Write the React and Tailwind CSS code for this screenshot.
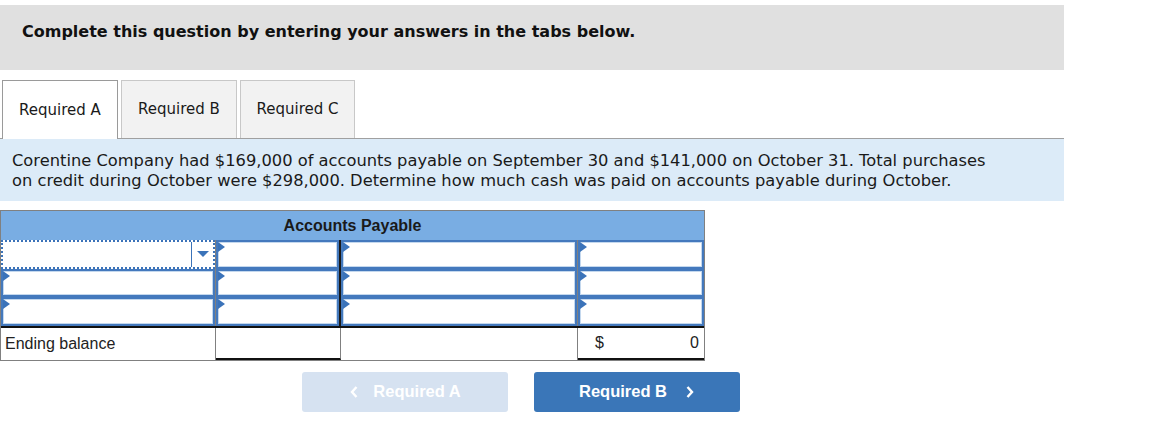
import React from "react";

const verdana = { fontFamily: "'DejaVu Sans', Verdana, sans-serif" };
const arial = { fontFamily: "'Liberation Sans', Arial, sans-serif" };

const Flag = () => (
  <span className="absolute top-0 left-0 w-0 h-0 border-y-[5px] border-y-transparent border-l-[7px] border-l-[#3b73b9]" />
);

const InputCell = ({ flag = true }) => (
  <div className="relative h-full border-2 border-[#4479bd] shadow-[inset_0_0_0_1px_#c4d8ee] bg-white">
    {flag && <Flag />}
  </div>
);

const DropdownCell = () => (
  <div className="h-full border-2 border-dotted border-[#3b73b9] bg-white flex">
    <div className="flex-1" />
    <div className="w-[22px] border-l border-[#3b73b9] flex items-center justify-center">
      <span className="w-0 h-0 border-x-[6px] border-x-transparent border-t-[6px] border-t-[#3b73b9]" />
    </div>
  </div>
);

const App = () => {
  const rows = [0, 1, 2];

  return (
    <div className="w-[1171px] h-[447px] bg-white pt-[5px]" style={verdana}>
      {/* Instructions */}
      <div className="w-[1064px] h-[65px] bg-[#e0e0e0] pl-[22px] pt-[16px]">
        <p className="text-[16px] leading-[22px] font-bold text-[#111]">
          Complete this question by entering your answers in the tabs below.
        </p>
      </div>

      {/* Tabs */}
      <div className="mt-[10px] w-[1064px] flex items-end border-b border-[#a0a0a0] pl-[2px] gap-[3px]">
        <div className="w-[116px] h-[59px] bg-white border border-[#9a9a9a] border-b-0 -mb-px flex items-center justify-center text-[15px] text-[#1a1a1a]">
          Required A
        </div>
        <div className="w-[116px] h-[58px] bg-[#f2f2f2] border border-[#c8c8c8] border-b-0 flex items-center justify-center text-[15px] text-[#1a1a1a]">
          Required B
        </div>
        <div className="w-[115px] h-[58px] bg-[#f2f2f2] border border-[#c8c8c8] border-b-0 flex items-center justify-center text-[15px] text-[#1a1a1a]">
          Required C
        </div>
      </div>

      {/* Question */}
      <div className="w-[1064px] h-[62px] bg-[#dcebf8] px-[12px] pt-[12px] text-[16.3px] leading-[20px] text-[#1a1a1a]">
        Corentine Company had $169,000 of accounts payable on September 30 and $141,000 on October 31. Total purchases
        <br />
        on credit during October were $298,000. Determine how much cash was paid on accounts payable during October.
      </div>

      {/* T-account table */}
      <div className="mt-[9px] w-[705px] border border-[#808080]" style={arial}>
        <div className="h-[29px] bg-[#79ade3] flex items-center justify-center text-[16px] font-bold text-[#1a1a1a]">
          Accounts Payable
        </div>
        {rows.map((r) => (
          <div key={r} className="grid grid-cols-[215px_125px_237px_126px] h-[28.5px]">
            <div className="h-full border-r border-[#808080]">
              {r === 0 ? <DropdownCell /> : <InputCell />}
            </div>
            <div className="h-full border-r-2 border-[#1a1a1a]">
              <InputCell />
            </div>
            <div className="h-full border-r border-[#808080]">
              <InputCell />
            </div>
            <div className="h-full">
              <InputCell />
            </div>
          </div>
        ))}
        <div className="grid grid-cols-[215px_125px_237px_126px] h-[34px] border-t-2 border-[#111] text-[16px] text-[#222]">
          <div className="border-r border-[#808080] flex items-center pl-[4px]">Ending balance</div>
          <div className="border-r border-[#808080] border-b-2 border-b-[#111]" />
          <div className="border-r border-[#808080]" />
          <div className="border-b-2 border-b-[#111] flex items-center justify-between pl-[17px] pr-[5px]">
            <span>$</span>
            <span>0</span>
          </div>
        </div>
      </div>

      {/* Nav buttons */}
      <div className="mt-[11px] flex gap-[26px] pl-[302px]" style={arial}>
        <div className="w-[206px] h-[40px] rounded-[3px] bg-[#d6e2f1] flex items-center justify-center gap-[14px] text-white font-bold text-[16.5px]">
          <svg width="10" height="14" viewBox="0 0 10 14" fill="none">
            <path d="M7.5 2 L3 7 L7.5 12" stroke="white" strokeWidth="2.4" />
          </svg>
          <span>Required A</span>
        </div>
        <div className="w-[206px] h-[40px] rounded-[3px] bg-[#3a76b8] flex items-center justify-center gap-[18px] text-white font-bold text-[16.5px]">
          <span>Required B</span>
          <svg width="10" height="14" viewBox="0 0 10 14" fill="none">
            <path d="M2.5 2 L7 7 L2.5 12" stroke="white" strokeWidth="2.4" />
          </svg>
        </div>
      </div>
    </div>
  );
};

export default App;
